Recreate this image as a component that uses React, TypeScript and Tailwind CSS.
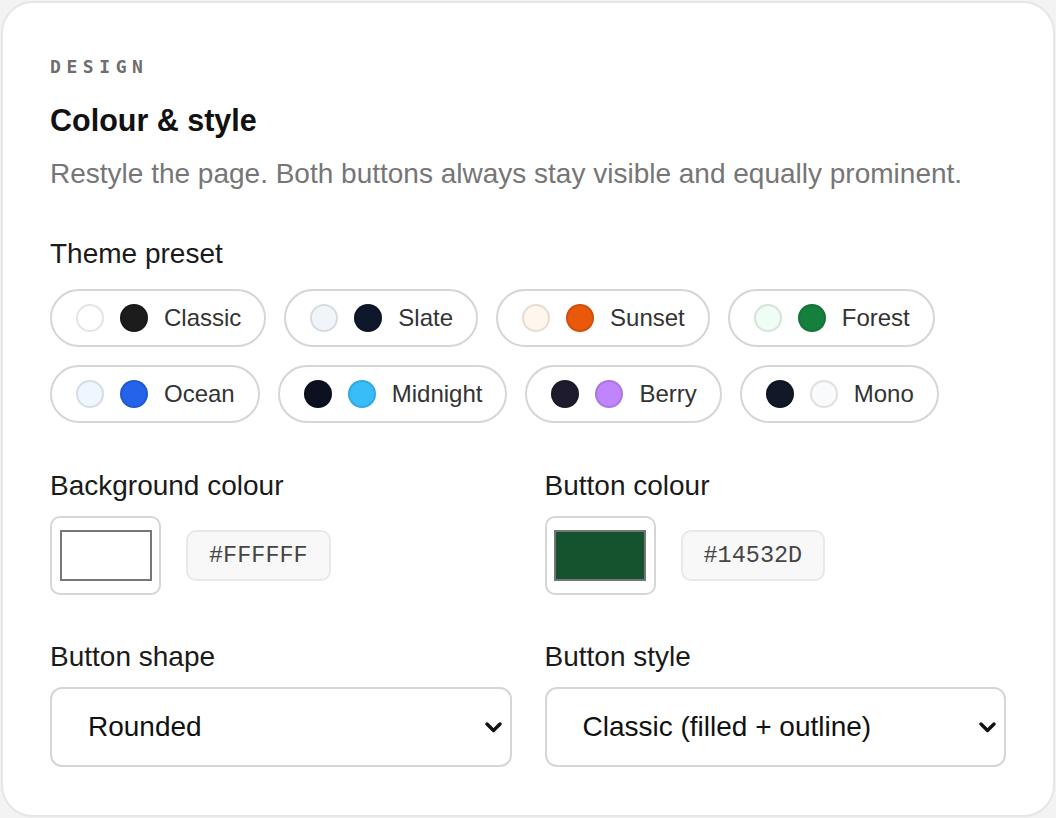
import { useState } from "react";

interface Preset { name: string; a: string; b: string; }

const presets: Preset[][] = [
  [
    { name: "Classic", a: "#ffffff", b: "#1c1c1c" },
    { name: "Slate", a: "#f1f5f9", b: "#0f172a" },
    { name: "Sunset", a: "#fff7ed", b: "#ea580c" },
    { name: "Forest", a: "#f0fdf4", b: "#15803d" },
  ],
  [
    { name: "Ocean", a: "#eff6ff", b: "#2563eb" },
    { name: "Midnight", a: "#0b1120", b: "#38bdf8" },
    { name: "Berry", a: "#1e1b2e", b: "#c084fc" },
    { name: "Mono", a: "#111827", b: "#f9fafb" },
  ],
];

const sans = "font-['Liberation_Sans',Arial,sans-serif]";
const mono = "font-['Liberation_Mono','Courier_New',monospace]";

function Dot({ color }: { color: string }) {
  return (
    <span
      className="w-[28px] h-[28px] rounded-full border-2 border-black/10 shrink-0"
      style={{ backgroundColor: color }}
    />
  );
}

function ColourField({ label, value }: { label: string; value: string }) {
  return (
    <div>
      <div className="text-[28px] leading-[34px] text-[#1a1a1a]">{label}</div>
      <div className="flex items-center gap-[25px] mt-[13px]">
        <div className="w-[111px] h-[79px] rounded-[10px] border-2 border-[#d6d6d6] flex items-center justify-center bg-white">
          <div className="w-[92px] h-[51px] border-2 border-[#767676]" style={{ backgroundColor: value }} />
        </div>
        <div className={`${mono} h-[51px] px-[21px] rounded-[10px] border-2 border-[#e8e8e8] bg-[#f8f8f8] flex items-center text-[23.5px] text-[#454545]`}>
          {value}
        </div>
      </div>
    </div>
  );
}

function Select({ label, value, options }: { label: string; value: string; options: string[] }) {
  const [v, setV] = useState(value);
  return (
    <div>
      <div className="text-[28px] leading-[34px] text-[#1a1a1a]">{label}</div>
      <div className="relative mt-[13px]">
        <select
          value={v}
          onChange={e => setV(e.target.value)}
          className={`${sans} appearance-none w-full h-[80px] rounded-[12px] border-2 border-[#d6d6d6] bg-white pl-[36px] text-[28px] text-[#111] outline-none`}
        >
          {options.map(o => <option key={o}>{o}</option>)}
        </select>
        <svg className="absolute right-[10px] top-[35px] pointer-events-none" width="17" height="11" viewBox="0 0 17 11">
          <path d="M2 2 L8.5 8.5 L15 2" fill="none" stroke="#111" strokeWidth="3.4" strokeLinecap="round" strokeLinejoin="round" />
        </svg>
      </div>
    </div>
  );
}

export default function App() {
  const [active, setActive] = useState("Forest");
  return (
    <div className={`${sans} w-[1056px] h-[818px] bg-[#f3f3f3] p-px`}>
      <div className="w-[1054px] h-[816px] bg-white rounded-[32px] border-2 border-[#e6e6e6] pl-[47px] pr-[47px] pt-[53px]">
        <div className="font-['DejaVu_Sans_Mono',monospace] text-[18px] leading-[22px] font-bold tracking-[0.31em] text-[#6e6e6e]">DESIGN</div>
        <h2 className="text-[30.5px] leading-[36px] font-bold text-[#111] mt-[24px]">Colour &amp; style</h2>
        <p className="text-[28px] leading-[34px] text-[#767676] mt-[19px]">
          Restyle the page. Both buttons always stay visible and equally prominent.
        </p>

        <div className="text-[28px] leading-[34px] text-[#1a1a1a] mt-[46px]">Theme preset</div>
        <div className="flex flex-col gap-[18px] mt-[18px]">
          {presets.map((row, i) => (
            <div key={i} className="flex gap-[18px]">
              {row.map(p => (
                <button
                  key={p.name}
                  onClick={() => setActive(p.name)}
                  className="h-[58px] rounded-full border-2 border-[#d6d6d6] bg-white pl-[24px] pr-[23px] flex items-center gap-[16px] text-[24px] text-[#333]"
                >
                  <Dot color={p.a} />
                  <Dot color={p.b} />
                  <span>{p.name}</span>
                </button>
              ))}
            </div>
          ))}
        </div>
        <span className="hidden">{active}</span>

        <div className="grid grid-cols-2 gap-x-[33px] mt-[46px]">
          <ColourField label="Background colour" value="#FFFFFF" />
          <ColourField label="Button colour" value="#14532D" />
        </div>

        <div className="grid grid-cols-2 gap-x-[33px] mt-[45px]">
          <Select label="Button shape" value="Rounded" options={["Rounded", "Pill", "Square"]} />
          <Select label="Button style" value="Classic (filled + outline)" options={["Classic (filled + outline)", "Both filled", "Both outline"]} />
        </div>
      </div>
    </div>
  );
}
